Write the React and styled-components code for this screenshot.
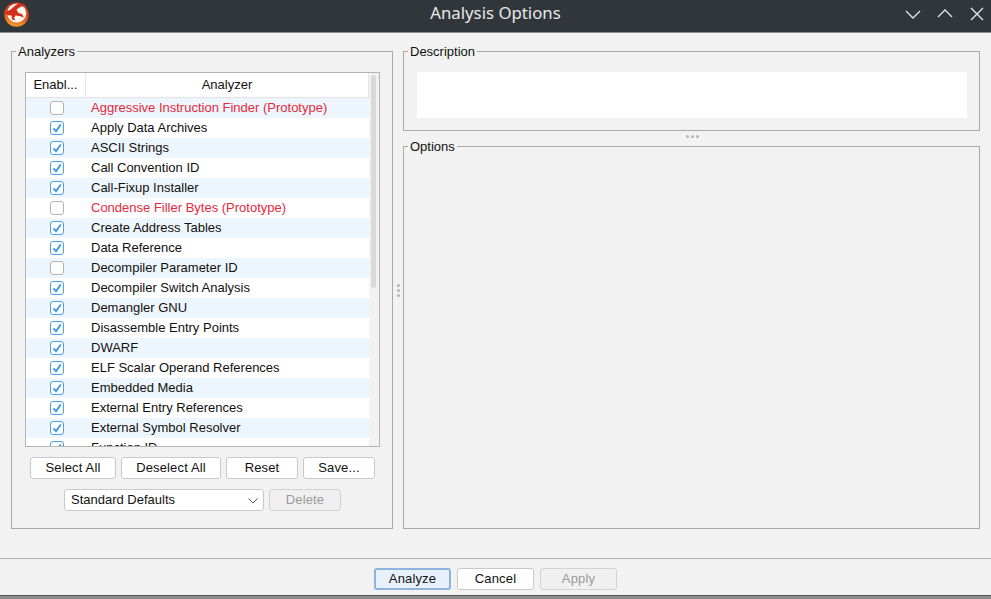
import React from "react";
import styled, { createGlobalStyle } from "styled-components";

const GlobalStyle = createGlobalStyle`
  html, body {
    margin: 0;
    padding: 0;
    background: #f2f2f2;
    overflow: hidden;
  }
  * {
    box-sizing: border-box;
  }
`;

const analyzers = [
  { name: "Aggressive Instruction Finder (Prototype)", on: false, proto: true },
  { name: "Apply Data Archives", on: true },
  { name: "ASCII Strings", on: true },
  { name: "Call Convention ID", on: true },
  { name: "Call-Fixup Installer", on: true },
  { name: "Condense Filler Bytes (Prototype)", on: false, proto: true },
  { name: "Create Address Tables", on: true },
  { name: "Data Reference", on: true },
  { name: "Decompiler Parameter ID", on: false },
  { name: "Decompiler Switch Analysis", on: true },
  { name: "Demangler GNU", on: true },
  { name: "Disassemble Entry Points", on: true },
  { name: "DWARF", on: true },
  { name: "ELF Scalar Operand References", on: true },
  { name: "Embedded Media", on: true },
  { name: "External Entry References", on: true },
  { name: "External Symbol Resolver", on: true },
  { name: "Function ID", on: true },
];

function Logo() {
  return (
    <svg width="25" height="25" viewBox="0 0 25 25">
      <defs>
        <linearGradient id="ring" x1="0.6" y1="0" x2="0.4" y2="1">
          <stop offset="0" stopColor="#c8281c" />
          <stop offset="0.55" stopColor="#e4501c" />
          <stop offset="1" stopColor="#f0a030" />
        </linearGradient>
      </defs>
      <circle cx="12.5" cy="12.5" r="12.2" fill="url(#ring)" />
      <circle cx="12.7" cy="11" r="9.6" fill="#fdf6ee" />
      <path
        d="M0.8 10 L6 8 L10 4.5 L14 1.5 L20 2 L22 5 L17 4.5 L14 6.5 L12.5 8 L14.5 11 L18 12 L20 15.5 L15.5 14 L11.5 13.5 L10 16 L11.5 18.5 L8 17.5 L7.5 13.5 L3 13 Z"
        fill="#d42e1c"
      />
    </svg>
  );
}

function CheckMark() {
  return (
    <svg width="12" height="12" viewBox="0 0 12 12">
      <path d="M2.5 6.3 L5 9.2 L9.8 2.4" fill="none" stroke="#3d97e6" strokeWidth="1.8" />
    </svg>
  );
}

export default function App() {
  return (
    <>
      <GlobalStyle />
      <Window>
        <TitleBar>
          <LogoSlot>
            <Logo />
          </LogoSlot>
          <Title>Analysis Options</Title>
          <WindowControls>
            <svg width="16" height="16" viewBox="-1 -1 16 16">
              <path d="M0 4 L7 11 L14 4" fill="none" stroke="#e4e6e8" strokeWidth="1.3" />
            </svg>
            <svg width="16" height="16" viewBox="0 0 16 16">
              <path d="M1 11 L8 4 L15 11" fill="none" stroke="#e4e6e8" strokeWidth="1.3" />
            </svg>
            <svg width="16" height="16" viewBox="0 0 16 16">
              <path d="M2 2 L14 14 M14 2 L2 14" fill="none" stroke="#e4e6e8" strokeWidth="1.4" />
            </svg>
          </WindowControls>
        </TitleBar>

        <Main>
          <LeftGroup>
            <GroupTitle>Analyzers</GroupTitle>
            <GroupBody>
              <Table>
                <TableBody>
                  <HeaderRow>
                    <HeaderCell $width="60px">Enabl...</HeaderCell>
                    <HeaderCell>Analyzer</HeaderCell>
                  </HeaderRow>
                  {analyzers.map((a, i) => (
                    <Row key={a.name} $odd={i % 2 === 0}>
                      <CheckCell>
                        <Check $on={a.on}>{a.on && <CheckMark />}</Check>
                      </CheckCell>
                      <NameCell $proto={a.proto}>{a.name}</NameCell>
                    </Row>
                  ))}
                </TableBody>
                <ScrollTrack>
                  <ScrollThumb />
                </ScrollTrack>
              </Table>
              <ButtonRow>
                <Button $width="86px">Select All</Button>
                <Button $width="100px">Deselect All</Button>
                <Button $width="72px">Reset</Button>
                <Button $width="72px">Save...</Button>
              </ButtonRow>
              <ButtonRow>
                <Combo>
                  Standard Defaults
                  <svg width="10" height="6" viewBox="0 0 10 6">
                    <path d="M0.5 0.5 L5 5 L9.5 0.5" fill="none" stroke="#555" strokeWidth="1" />
                  </svg>
                </Combo>
                <Button $width="72px" disabled>
                  Delete
                </Button>
              </ButtonRow>
            </GroupBody>
          </LeftGroup>

          <VSplitter>
            <Dot />
            <Dot />
            <Dot />
          </VSplitter>

          <RightColumn>
            <DescriptionGroup>
              <GroupTitle>Description</GroupTitle>
              <GroupBody>
                <DescriptionBox />
              </GroupBody>
            </DescriptionGroup>
            <HSplitter>
              <Dot />
              <Dot />
              <Dot />
            </HSplitter>
            <OptionsGroup>
              <GroupTitle>Options</GroupTitle>
            </OptionsGroup>
          </RightColumn>
        </Main>

        <Footer>
          <Button $width="77px" $primary>
            Analyze
          </Button>
          <Button $width="77px">Cancel</Button>
          <Button $width="77px" disabled>
            Apply
          </Button>
        </Footer>
        <BottomEdge />
      </Window>
    </>
  );
}

const Window = styled.div`
  width: 991px;
  height: 599px;
  display: flex;
  flex-direction: column;
  background: #f2f2f2;
  color: #111;
  font-family: "Liberation Sans", Arial, sans-serif;
  font-size: 13px;
`;

const TitleBar = styled.div`
  height: 33px;
  flex: none;
  display: grid;
  grid-template-columns: 1fr auto 1fr;
  align-items: center;
  background: #31363b;
  border-bottom: 1px solid #8a8d90;
`;

const LogoSlot = styled.div`
  display: flex;
  align-items: center;
  padding: 0 0 4px 4px;
`;

const Title = styled.div`
  font-family: "Noto Sans", sans-serif;
  font-size: 16.8px;
  line-height: 22px;
  color: #e6e8ea;
  padding-bottom: 6px;
`;

const WindowControls = styled.div`
  display: flex;
  justify-content: flex-end;
  align-items: center;
  gap: 16px;
  padding: 0 6px 4px 0;
`;

const Main = styled.div`
  flex: 1;
  min-height: 0;
  display: flex;
  padding: 11px 11px 29px 11px;
`;

const Group = styled.fieldset`
  margin: 0;
  padding: 0;
  min-width: 0;
  border: 1px solid #a9a9a9;
`;

const GroupTitle = styled.legend`
  height: 15px;
  line-height: 15px;
  padding: 0 2px;
  margin-left: 4px;
  font-size: 13px;
  color: #111;
`;

const GroupBody = styled.div`
  padding: 13px 12px 0 13px;
`;

const LeftGroup = styled(Group)`
  width: 382px;
  flex: none;
`;

const Table = styled.div`
  height: 375px;
  display: flex;
  overflow: hidden;
  border: 1px solid #b4b4b4;
  background: #fff;
`;

const TableBody = styled.div`
  flex: 1;
  min-width: 0;
  overflow: hidden;
`;

const HeaderRow = styled.div`
  height: 25px;
  display: flex;
  border-bottom: 1px solid #e2e2e2;
  background: #fff;
`;

const HeaderCell = styled.div`
  flex: ${(p) => (p.$width ? `0 0 ${p.$width}` : "1")};
  display: flex;
  align-items: center;
  justify-content: center;
  padding-bottom: 2px;
  border-right: 1px solid #e6e6e6;
`;

const Row = styled.div`
  height: 20px;
  display: flex;
  align-items: center;
  background: ${(p) => (p.$odd ? "#eef6fd" : "#fff")};
`;

const CheckCell = styled.div`
  flex: 0 0 60px;
  display: flex;
  justify-content: center;
  padding-left: 2px;
`;

const Check = styled.span`
  width: 14px;
  height: 14px;
  display: flex;
  align-items: center;
  justify-content: center;
  background: #fff;
  border: 1px solid ${(p) => (p.$on ? "#4a9fe8" : "#b4b4b4")};
  border-radius: 3px;
`;

const NameCell = styled.div`
  padding: 0 0 2px 5px;
  white-space: nowrap;
  color: ${(p) => (p.$proto ? "#e6283c" : "#111")};
`;

const ScrollTrack = styled.div`
  flex: 0 0 10px;
  padding: 2px 3px 0 2px;
  background: #f2f2f2;
`;

const ScrollThumb = styled.div`
  height: 213px;
  border-radius: 3px;
  background: #d9d9d9;
`;

const ButtonRow = styled.div`
  display: flex;
  justify-content: center;
  gap: 5px;
  margin-top: 10px;
`;

const Button = styled.button`
  width: ${(p) => p.$width};
  height: 22px;
  padding: 0 0 2px;
  font: inherit;
  letter-spacing: 0.15px;
  color: #111;
  background: ${(p) => (p.$primary ? "#e8f1fb" : "#fff")};
  border: ${(p) => (p.$primary ? "2px solid #8cb4dc" : "1px solid #c9c9c9")};
  border-radius: 3px;

  &:disabled {
    color: #9a9a9a;
    background: #f0f0f0;
    border-color: #d2d2d2;
  }
`;

const Combo = styled.div`
  width: 200px;
  height: 22px;
  display: flex;
  align-items: center;
  justify-content: space-between;
  padding: 0 5px 2px 6px;
  background: #fff;
  border: 1px solid #c9c9c9;
  border-radius: 3px;

  svg {
    margin-top: 3px;
  }
`;

const VSplitter = styled.div`
  flex: 0 0 10px;
  display: flex;
  flex-direction: column;
  align-items: center;
  justify-content: center;
  gap: 2px;
  padding: 7px 0 0;
`;

const Dot = styled.span`
  width: 3px;
  height: 3px;
  border-radius: 50%;
  background: #b4b4b4;
`;

const RightColumn = styled.div`
  flex: 1;
  min-width: 0;
  display: flex;
  flex-direction: column;
`;

const DescriptionGroup = styled(Group)`
  flex: none;
  height: 87px;
`;

const DescriptionBox = styled.div`
  height: 46px;
  background: #fff;
`;

const HSplitter = styled.div`
  flex: 0 0 8px;
  display: flex;
  align-items: flex-start;
  justify-content: center;
  gap: 2px;
  padding: 4px 0 0 2px;
`;

const OptionsGroup = styled(Group)`
  flex: 1;
  min-height: 0;
`;

const Footer = styled.div`
  height: 37px;
  flex: none;
  display: flex;
  justify-content: center;
  align-items: flex-start;
  gap: 6px;
  padding: 9px 0 0 0;
  border-top: 1px solid #b0b0b0;
`;

const BottomEdge = styled.div`
  height: 4px;
  flex: none;
  background: #8c8c8c;
  border-top: 1px solid #55585a;
`;
